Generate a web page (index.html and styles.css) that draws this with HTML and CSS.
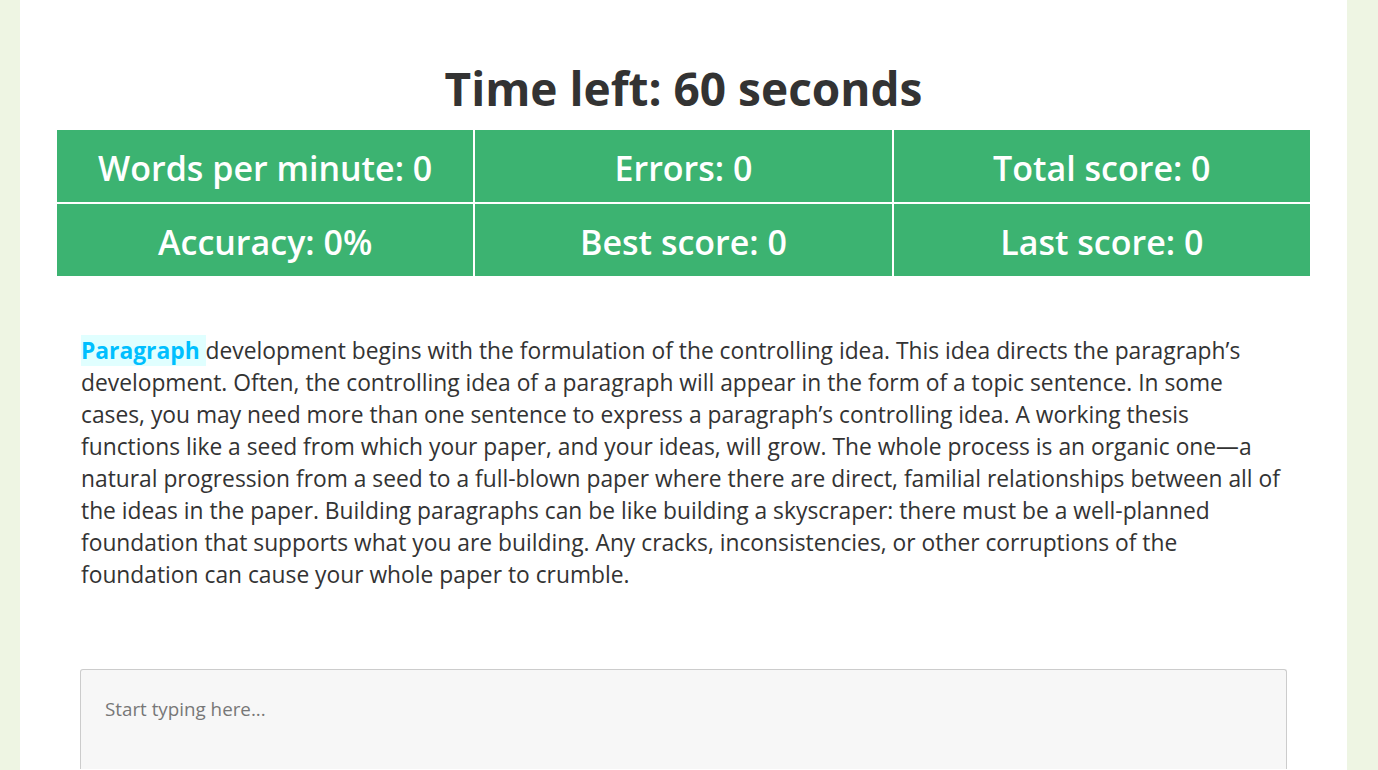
FILE: index.html
```html
<!DOCTYPE html>
<html lang="en">
<head>
<meta charset="utf-8">
<title>Typing Test</title>
<link rel="stylesheet" href="styles.css">
</head>
<body>
<main class="page">
  <h1 class="timer">Time left: 60 seconds</h1>
  <div class="stats">
    <div class="stat">Words per minute: 0</div>
    <div class="stat">Errors: 0</div>
    <div class="stat">Total score: 0</div>
    <div class="stat">Accuracy: 0%</div>
    <div class="stat">Best score: 0</div>
    <div class="stat">Last score: 0</div>
  </div>
  <p class="passage"><span class="current">Paragraph </span>development begins with the formulation of the controlling idea. This idea directs the paragraph’s development. Often, the controlling idea of a paragraph will appear in the form of a topic sentence. In some cases, you may need more than one sentence to express a paragraph’s controlling idea. A working thesis functions like a seed from which your paper, and your ideas, will grow. The whole process is an organic one—a natural progression from a seed to a full-blown paper where there are direct, familial relationships between all of the ideas in the paper. Building paragraphs can be like building a skyscraper: there must be a well-planned foundation that supports what you are building. Any cracks, inconsistencies, or other corruptions of the foundation can cause your whole paper to crumble.</p>
  <textarea class="input" placeholder="Start typing here..."></textarea>
</main>
</body>
</html>
```
FILE: styles.css
```css
html, body {
  margin: 0;
  padding: 0;
  height: 100%;
}
body {
  background: #eef5e3;
  font-family: "Open Sans", "Noto Sans", sans-serif;
  color: #333;
  overflow: hidden;
}
.page {
  background: #fff;
  margin: 0 31px 0 20px;
  padding: 58px 37px 0;
  min-height: 100%;
  box-sizing: border-box;
}
.timer {
  margin: 0 0 12px;
  text-align: center;
  font-size: 46px;
  line-height: 60px;
  font-weight: 700;
  color: #333;
}
.stats {
  display: grid;
  grid-template-columns: 1fr 1fr 1fr;
  gap: 2px;
}
.stat {
  background: #3cb371;
  color: #fff;
  height: 72px;
  box-sizing: border-box;
  padding-top: 4px;
  display: flex;
  align-items: center;
  justify-content: center;
  font-size: 34px;
  font-weight: 600;
}
.passage {
  margin: 59px 23px 0 24px;
  font-size: 22.8px;
  line-height: 32px;
}
.current {
  background: #e0ffff;
  color: #00bfff;
  font-weight: 700;
}
.input {
  display: block;
  box-sizing: border-box;
  margin: 78px 23px 0;
  width: calc(100% - 46px);
  height: 100px;
  background: #f7f7f7;
  border: 1px solid #ccc;
  border-bottom: 0;
  border-radius: 3px 3px 0 0;
  padding: 26px 24px 0;
  font-family: inherit;
  font-size: 18.8px;
  color: #333;
  resize: none;
}
.input::placeholder {
  color: #777;
}
```
